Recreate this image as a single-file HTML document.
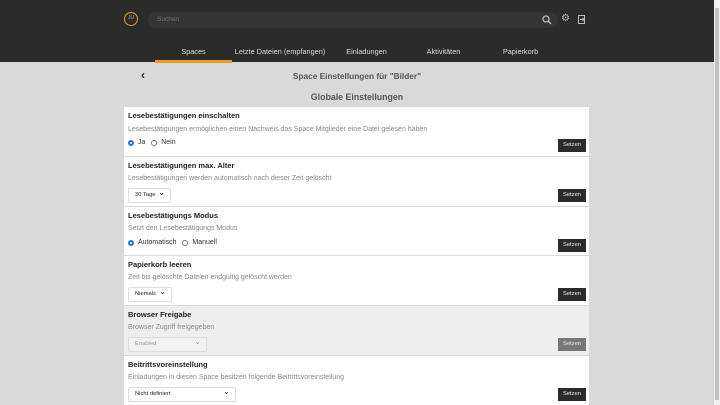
<!DOCTYPE html><html><head><style>
*{margin:0;padding:0;box-sizing:border-box}
body{width:720px;height:405px;overflow:hidden;background:#d9d9d9;font-family:"Liberation Sans",sans-serif;position:relative}
.hdr{position:absolute;left:0;top:0;width:714px;height:62px;background:#2b2b2b}
.logo{position:absolute;left:124px;top:12px;width:14px;height:14px;border:1.5px solid #e0a020;border-radius:50%;color:#aaa;font-size:5px;text-align:center;line-height:11px}
.search{position:absolute;left:148px;top:12px;width:410px;height:16px;background:#353535;border-radius:8px;color:#777;font-size:6.5px;line-height:16px;padding-left:9px}
.tab{position:absolute;top:47px;font-size:7.3px;color:#ddd;text-align:center}
.ul{position:absolute;left:155px;top:60px;width:77px;height:3px;background:#e8a020}
.card{position:absolute;left:124px;width:465px;height:49px;background:#fff}
.t{position:absolute;left:4px;top:4px;font-size:7.5px;font-weight:bold;color:#222}
.d{position:absolute;left:4px;top:18px;font-size:7px;color:#888}
.b{position:absolute;left:434px;top:32px;width:28px;height:13px;background:#2b2b2b;color:#eee;font-size:5.8px;text-align:center;line-height:13px}
.r{position:absolute;left:4px;top:32px;font-size:7px;color:#333;display:flex;align-items:center}
.rd{display:inline-block;width:6px;height:6px;border-radius:50%;border:1px solid #777;margin-right:4px}
.rd.on{border:2px solid #1a73e8}
.s{position:absolute;left:4px;top:31px;height:15px;border:1px solid #ddd;border-radius:2px;font-size:5.8px;color:#222;line-height:13px;padding-left:6px}
.s:after{content:"⌄";position:absolute;right:5px;top:-3px;font-size:8px}
</style></head><body>
<div class="hdr">
<div class="logo">JU</div>
<div class="search">Suchen</div>
<svg style="position:absolute;left:542px;top:15px" width="10" height="10"><circle cx="4" cy="4" r="3" fill="none" stroke="#bbb" stroke-width="1.3"/><line x1="6.3" y1="6.3" x2="9" y2="9" stroke="#bbb" stroke-width="1.4"/></svg>
<div style="position:absolute;left:561px;top:13px;color:#bbb;font-size:10px">⚙</div>
<svg style="position:absolute;left:578px;top:15px" width="8" height="9"><rect x="0.5" y="0.5" width="6" height="8" fill="none" stroke="#bbb"/><path d="M2 4.5h4M4.5 3l1.5 1.5L4.5 6" stroke="#bbb" fill="none"/></svg>
<div class="tab" style="left:155px;width:77px">Spaces</div>
<div class="tab" style="left:232px;width:96px">Letzte Dateien (empfangen)</div>
<div class="tab" style="left:328px;width:77px">Einladungen</div>
<div class="tab" style="left:405px;width:77px">Aktivitäten</div>
<div class="tab" style="left:482px;width:77px">Papierkorb</div>
<div class="ul"></div>
</div>
<div style="position:absolute;left:141px;top:68px;font-size:12px;font-weight:bold;color:#222">‹</div>
<div style="position:absolute;left:0;width:714px;top:71px;text-align:center;font-size:8.3px;font-weight:bold;color:#555">Space Einstellungen für "Bilder"</div>
<div style="position:absolute;left:0;width:714px;top:92px;text-align:center;font-size:8.8px;font-weight:bold;color:#555">Globale Einstellungen</div>
<div style="position:absolute;left:714px;top:0;width:6px;height:405px;background:#f1f1f1"><div style="position:absolute;left:1px;top:8px;width:4px;height:392px;background:#c1c1c1"></div></div>

<div class="card" style="top:107px"><div class="t">Lesebestätigungen einschalten</div><div class="d" style="top:19px">Lesebestätigungen ermöglichen einen Nachweis das Space Mitglieder eine Datei gelesen haben</div><div class="r"><span class="rd on"></span>Ja&nbsp;&nbsp;&nbsp;<span class="rd"></span>Nein</div><div class="b">Setzen</div></div>
<div class="card" style="top:157px"><div class="t">Lesebestätigungen max. Alter</div><div class="d">Lesebestätigungen werden automatisch nach dieser Zeit gelöscht</div><div class="s" style="width:43px">30 Tage</div><div class="b">Setzen</div></div>
<div class="card" style="top:207px;height:48px"><div class="t">Lesebestätigungs Modus</div><div class="d">Setzt den Lesebestätigungs Modus</div><div class="r"><span class="rd on"></span>Automatisch&nbsp;&nbsp;&nbsp;<span class="rd"></span>Manuell</div><div class="b">Setzen</div></div>
<div class="card" style="top:256px"><div class="t">Papierkorb leeren</div><div class="d">Zeit bis gelöschte Dateien endgültig gelöscht werden</div><div class="s" style="width:44px">Niemals</div><div class="b">Setzen</div></div>
<div class="card" style="top:306px;background:#eee"><div class="t">Browser Freigabe</div><div class="d">Browser Zugriff freigegeben</div><div class="s" style="width:79px;color:#999;background:#f2f2f2">Enabled</div><div class="b" style="background:#777">Setzen</div></div>
<div class="card" style="top:356px"><div class="t">Beitrittsvoreinstellung</div><div class="d">Einladungen in diesen Space besitzen folgende Beitrittsvoreinstellung</div><div class="s" style="width:108px">Nicht definiert</div><div class="b">Setzen</div></div>
</body></html>
